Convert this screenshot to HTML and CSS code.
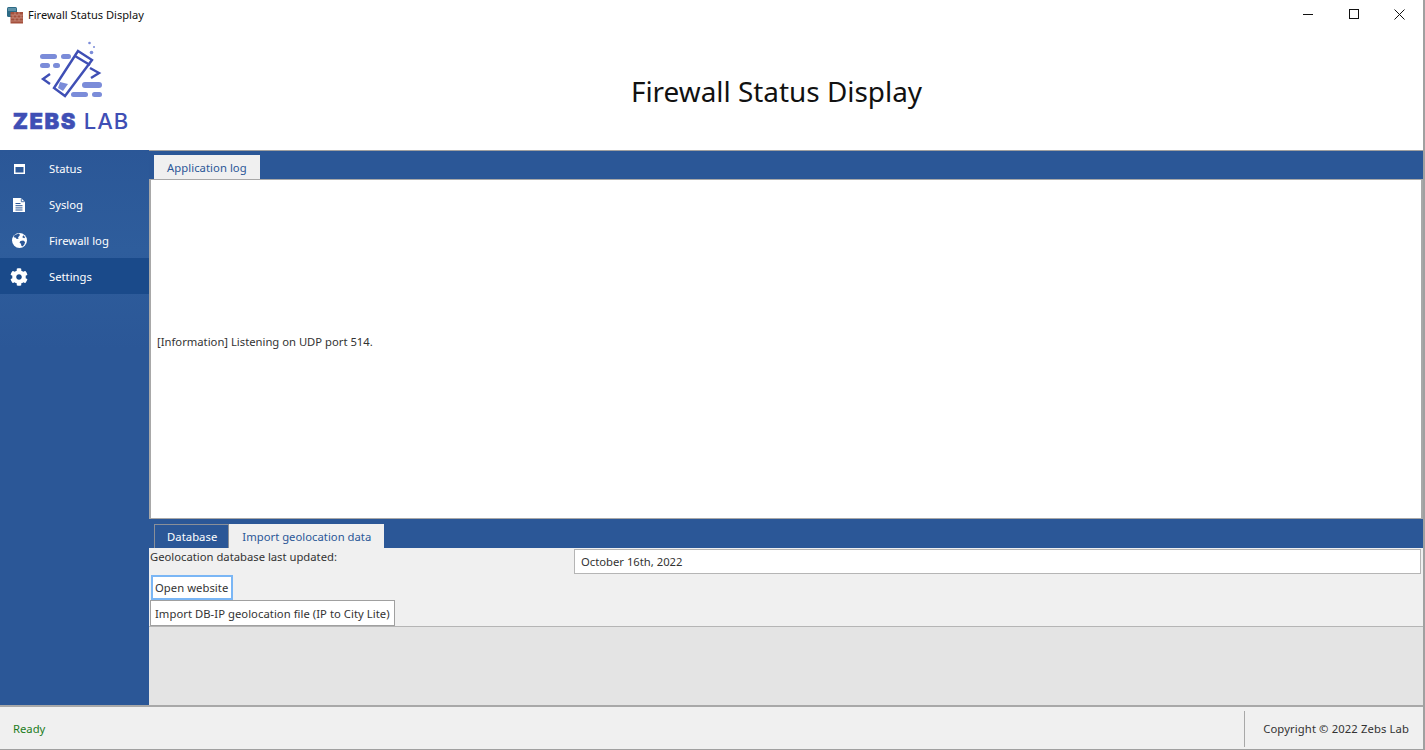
FILE: index.html
```html
<!DOCTYPE html>
<html lang="en">
<head>
<meta charset="utf-8">
<title>Firewall Status Display</title>
<link rel="stylesheet" href="styles.css">
</head>
<body>
<div class="window">
  <div class="titlebar">
    <svg class="app-icon" viewBox="0 0 16 17" width="16" height="17">
      <rect x="0" y="0" width="10" height="10" rx="1.500" fill="#2c6a85"/>
      <rect x="1" y="1" width="8" height="3" fill="#5d92a8"/>
      <rect x="3.500" y="5" width="12.500" height="11.500" fill="#a5503c"/>
      <path d="M3.500 8h12.500M3.500 11h12.500M3.500 14h12.500M8 5v3M12 5v3M6 8v3M10 8v3M14 8v3M8 11v3M12 11v3" stroke="#cf9a8a" stroke-width=".7" fill="none"/>
    </svg>
    <span class="title-text">Firewall Status Display</span>
    <div class="win-controls">
      <svg class="win-btn" viewBox="0 0 46 30" width="46" height="30"><path d="M18 14.500h10" stroke="#111" fill="none"/></svg>
      <svg class="win-btn" viewBox="0 0 46 30" width="46" height="30"><rect x="18.500" y="9.500" width="9" height="9" stroke="#111" fill="none"/></svg>
      <svg class="win-btn" viewBox="0 0 46 30" width="46" height="30"><path d="M17.500 9.500l10 10M27.500 9.500l-10 10" stroke="#111" fill="none"/></svg>
    </div>
  </div>
  <header class="header">
    <div class="logo">
      <svg class="logo-mark" viewBox="38 40 66 60" width="66" height="60">
        <g fill="#7b8cd9">
          <rect x="40" y="54" width="17" height="5" rx="2.500"/>
          <rect x="61" y="54" width="10" height="5" rx="2.500"/>
          <rect x="40" y="63" width="10" height="5" rx="2.500"/>
          <rect x="53" y="63" width="7" height="5" rx="2.500"/>
          <rect x="82" y="82" width="20" height="6" rx="3"/>
          <rect x="71" y="92" width="17" height="5" rx="2.500"/>
          <rect x="92" y="92" width="10" height="5" rx="2.500"/>
          <path d="M60 82l8 2-5 7-5-3z"/>
          <circle cx="89.500" cy="43" r="1.300"/>
          <circle cx="94" cy="47" r="1"/>
          <circle cx="91.500" cy="52.500" r="1.800"/>
        </g>
        <g fill="none" stroke="#3f4fb5" stroke-width="2.400">
          <path d="M78 51l14 9-27 36-11-8z"/>
          <path d="M75 56l15 9"/>
          <path d="M50 74l-7 5 7 5"/>
          <path d="M90 68l9 5-8 5"/>
        </g>
      </svg>
      <div class="logo-text"><b>ZEBS</b><span>LAB</span></div>
    </div>
    <h1 class="app-title">Firewall Status Display</h1>
  </header>
  <div class="body">
    <nav class="sidebar">
      <div class="nav-item">
        <span class="nav-icon"><svg viewBox="0 0 11 10" width="11" height="10"><path d="M0 0h11v10H0z M1.500 3v5.500h8V3z" fill="#fff" fill-rule="evenodd"/></svg></span>
        <span>Status</span>
      </div>
      <div class="nav-item">
        <span class="nav-icon"><svg viewBox="0 0 12 14" width="12" height="14"><path d="M0 0h8l4 4v10H0z" fill="#fff"/><path d="M8.300 .5v3.200h3.200" fill="none" stroke="#2b5797" stroke-width=".8"/><path d="M2.500 5.500h5M2.500 7.700h7M2.500 9.900h7M2.500 12h7" stroke="#2b5797" stroke-width="1"/></svg></span>
        <span>Syslog</span>
      </div>
      <div class="nav-item">
        <span class="nav-icon"><svg viewBox="0 0 16 16" width="15" height="15"><circle cx="8" cy="8" r="8" fill="#fff"/><path d="M4.500 1.500l3-1 1 1.500-1 1.500-1 1 .5 1.500-2 .5-1-1.500-2-.5.500-2zM9 8.500l3-.5 2 1.500-1 3-2 2-1-1-.5-2-1.500-1.500zM12 2.500l2 2-1 1-2-1z" fill="#2b5797"/></svg></span>
        <span>Firewall log</span>
      </div>
      <div class="nav-item active">
        <span class="nav-icon"><svg viewBox="0 0 512 512" width="18" height="18"><path fill="#fff" d="M487.400 315.700l-42.600-24.600c4.300-23.200 4.300-47 0-70.200l42.600-24.600c4.900-2.800 7.100-8.600 5.500-14-11.100-35.600-30-67.800-54.700-94.600-3.800-4.100-10-5.100-14.800-2.300L380.800 110c-17.900-15.400-38.500-27.300-60.800-35.100V25.800c0-5.600-3.900-10.500-9.400-11.700-36.700-8.200-74.300-7.800-109.200 0-5.500 1.200-9.400 6.100-9.400 11.700V75c-22.200 7.900-42.800 19.800-60.800 35.100L88.700 85.500c-4.900-2.800-11-1.900-14.800 2.300-24.700 26.700-43.600 58.900-54.700 94.600-1.700 5.400.6 11.200 5.500 14L67.300 221c-4.300 23.200-4.300 47 0 70.200l-42.600 24.600c-4.900 2.800-7.100 8.600-5.500 14 11.100 35.600 30 67.800 54.700 94.600 3.800 4.100 10 5.100 14.800 2.300l42.600-24.600c17.900 15.400 38.500 27.300 60.800 35.100v49.200c0 5.600 3.900 10.500 9.400 11.700 36.700 8.200 74.300 7.800 109.200 0 5.500-1.200 9.400-6.100 9.400-11.700v-49.200c22.200-7.900 42.800-19.800 60.800-35.100l42.600 24.600c4.900 2.800 11 1.900 14.800-2.300 24.700-26.700 43.600-58.900 54.700-94.600 1.500-5.500-.7-11.300-5.600-14.100zM256 336c-44.100 0-80-35.900-80-80s35.900-80 80-80 80 35.900 80 80-35.900 80-80 80z"/></svg></span>
        <span>Settings</span>
      </div>
    </nav>
    <main class="content">
      <div class="tabstrip tabstrip-top">
        <div class="tab selected">Application log</div>
      </div>
      <div class="logbox"><span>[Information] Listening on UDP port 514.</span></div>
      <div class="tabstrip tabstrip-bottom">
        <div class="tab dark">Database</div>
        <div class="tab selected import">Import geolocation data</div>
      </div>
      <section class="panel">
        <div class="form-row">
          <label class="field-label">Geolocation database last updated:</label>
          <div class="field-value">October 16th, 2022</div>
        </div>
        <button class="btn focus">Open website</button>
        <button class="btn">Import DB-IP geolocation file (IP to City Lite)</button>
      </section>
      <div class="filler"></div>
    </main>
  </div>
  <footer class="statusbar">
    <span class="ready">Ready</span>
    <span class="copyright">Copyright © 2022 Zebs Lab</span>
  </footer>
</div>
</body>
</html>
```
FILE: styles.css
```css
* { box-sizing: border-box; }
html, body { margin: 0; padding: 0; }
body {
  width: 1425px;
  height: 750px;
  overflow: hidden;
  background: #fff;
  font-family: "Noto Sans", "Open Sans", sans-serif;
  font-size: 11.25px;
  color: #333;
}
.window {
  width: 1425px;
  height: 750px;
  display: flex;
  flex-direction: column;
  border-right: 2px solid #a0a0a0;
  border-bottom: 1px solid #a0a0a0;
}
.titlebar {
  height: 30px;
  flex: none;
  display: flex;
  align-items: center;
  padding-left: 7px;
  background: #fff;
}
.app-icon { flex: none; margin-right: 5px; margin-top: 1px; }
.title-text { font-size: 11.100px; color: #111; margin-bottom: 2px; }
.win-controls { margin-left: auto; display: flex; }
.win-btn { display: block; }
.header {
  height: 120px;
  flex: none;
  display: flex;
  background: #fff;
}
.logo {
  width: 142px;
  flex: none;
  display: flex;
  flex-direction: column;
  align-items: center;
  padding-top: 10px;
}
.logo-mark { display: block; }
.logo-text {
  margin-top: 8px;
  display: flex;
  gap: 7px;
  font-family: "Inter", sans-serif;
  font-size: 22px;
  line-height: 26px;
  color: #3f4fb5;
  white-space: nowrap;
}
.logo-text b { font-weight: 900; letter-spacing: 1.500px; -webkit-text-stroke: .5px #3f4fb5; }
.logo-text span { font-weight: 500; letter-spacing: 1px; }
.app-title {
  margin: 0;
  flex: 1;
  align-self: center;
  text-align: center;
  font-size: 27.900px;
  font-weight: 400;
  color: #111;
  padding-right: 12px;
  padding-top: 2px;
}
.body {
  flex: 1;
  min-height: 0;
  display: flex;
  border-bottom: 2px solid #a8a8a8;
}
.sidebar {
  width: 149px;
  flex: none;
  background: linear-gradient(#2b5797, #2e5d9c 100px, #2b5797 200px);
  color: #fff;
}
.nav-item {
  height: 36px;
  padding-top: 1px;
  display: flex;
  align-items: center;
}
.nav-item.active { background: #1a4a8a; }
.nav-icon {
  width: 38px;
  margin-right: 11px;
  display: flex;
  justify-content: center;
}
.nav-icon svg { display: block; }
.content {
  flex: 1;
  min-width: 0;
  display: flex;
  flex-direction: column;
  background: #e4e4e4;
  border-top: 1px solid #a0a0a0;
}
.tabstrip {
  flex: none;
  display: flex;
  align-items: flex-end;
  background: #2b5797;
  padding-left: 5px;
}
.tabstrip-top { height: 28px; }
.tabstrip-bottom { height: 29px; }
.tab {
  height: 24px;
  padding: 0 13px;
  display: flex;
  align-items: center;
  color: #2b5797;
  white-space: nowrap;
  letter-spacing: .06px;
}
.tab.selected { background: #f0f0f0; }
.tab.import { letter-spacing: .02px; }
.tab.dark {
  background: #2b5797;
  color: #fff;
  border: 1px solid #8a8f98;
  border-bottom: none;
  padding: 0 11px 0 12px;
}
.logbox {
  height: 340px;
  flex: none;
  background: #fff;
  border: 2px solid #a8a8a8;
  border-top-width: 1px;
  border-bottom-width: 1px;
  display: flex;
  align-items: center;
  padding: 0 0 16px 6px;
}
.panel {
  height: 79px;
  flex: none;
  background: #f0f0f0;
  border-bottom: 1px solid #b5b5b5;
  padding: 1px 0 0 1px;
  display: flex;
  flex-direction: column;
  align-items: flex-start;
}
.form-row {
  width: 100%;
  display: flex;
  height: 25px;
}
.field-label { width: 424px; flex: none; line-height: 15px; }
.field-value {
  flex: 1;
  height: 25px;
  margin-right: 2px;
  background: #fff;
  border: 1px solid #b5b5b5;
  display: flex;
  align-items: center;
  padding-left: 6px;
}
.btn {
  font: inherit;
  color: #333;
  background: #fff;
  border: 1px solid #a0a0a0;
  height: 26px;
  padding: 0 4px;
  margin: 0;
  letter-spacing: .045px;
}
.btn.focus {
  border: 2px solid #7ab6f5;
  margin: 1px 0 0 1px;
  height: 25px;
  padding: 0 3px 0 2px;
}
.filler { flex: 1; }
.statusbar {
  height: 42px;
  flex: none;
  display: flex;
  align-items: center;
  background: #f0f0f0;
  padding: 1px 0 0 13px;
}
.ready { color: #1c7c1c; }
.copyright {
  margin-left: auto;
  height: 36px;
  display: flex;
  align-items: center;
  border-left: 1px solid #a8a8a8;
  padding: 0 14px 0 18px;
  letter-spacing: .12px;
}
```
